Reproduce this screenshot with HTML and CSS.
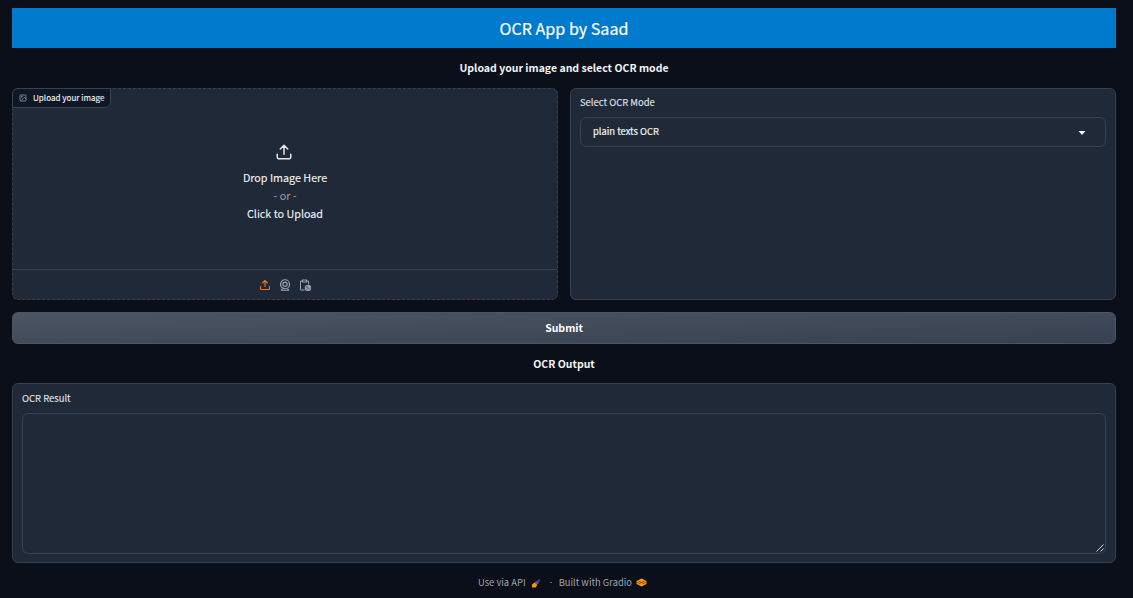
FILE: index.html
```html
<!DOCTYPE html>
<html lang="en">
<head>
<meta charset="utf-8">
<title>OCR App by Saad</title>
<link rel="stylesheet" href="styles.css">
</head>
<body>
<main class="app">
  <h1 class="banner">OCR App by Saad</h1>
  <h2 class="heading">Upload your image and select OCR mode</h2>
  <div class="row">
    <section class="panel upload">
      <div class="tag">
        <svg class="tag-icon" viewBox="0 0 24 24" fill="none" stroke="currentColor" stroke-width="2.2"><rect x="3" y="3" width="18" height="18" rx="2"/><circle cx="8.5" cy="8.5" r="1.5"/><path d="M21 15l-5-5L5 21"/></svg>
        <span>Upload your image</span>
      </div>
      <div class="drop">
        <svg class="drop-icon" viewBox="0 0 24 24" fill="none" stroke="currentColor" stroke-width="2" stroke-linecap="round" stroke-linejoin="round"><path d="M21 15v4a2 2 0 0 1-2 2H5a2 2 0 0 1-2-2v-4M17 8l-5-5-5 5M12 3v12"/></svg>
        <span>Drop Image Here</span>
        <span class="or">- or -</span>
        <span>Click to Upload</span>
      </div>
      <div class="sources">
        <svg class="source active" viewBox="0 0 24 24" fill="none" stroke="currentColor" stroke-width="2.2" stroke-linecap="round" stroke-linejoin="round"><path d="M21 15v4a2 2 0 0 1-2 2H5a2 2 0 0 1-2-2v-4M17 8l-5-5-5 5M12 3v12"/></svg>
        <svg class="source" viewBox="0 0 24 24" fill="none" stroke="currentColor" stroke-width="2.4"><circle cx="12" cy="10.5" r="9"/><circle cx="12" cy="10.5" r="4.2"/><path d="M7 19l-2 3.500h14l-2-3.500"/></svg>
        <svg class="source" viewBox="0 0 24 24" fill="none" stroke="currentColor" stroke-width="2"><path d="M11 22H3V4h4M15 4h4v7"/><rect x="7" y="2" width="8" height="4"/><rect x="12.500" y="13" width="11" height="10" rx="3" fill="currentColor"/><circle cx="16" cy="16" r=".6" class="cut"/><path d="M14 22l5-4 4 4" class="cut" stroke-width="1"/></svg>
      </div>
    </section>
    <section class="panel mode">
      <div class="label">Select OCR Mode</div>
      <div class="select"><span>plain texts OCR</span><svg class="caret" viewBox="0 0 8 4"><path d="M.5 0h7L4 4z" fill="currentColor"/></svg></div>
    </section>
  </div>
  <button class="submit">Submit</button>
  <h2 class="heading output">OCR Output</h2>
  <section class="panel result">
    <div class="label">OCR Result</div>
    <div class="textarea"><svg class="grip" viewBox="0 0 8 8" stroke="currentColor" fill="none"><path d="M0.5 7.5l7-7M4.5 7.5l3-3"/></svg></div>
  </section>
  <footer class="footer">
    <span class="api">Use via API</span>
    <svg class="rocket" viewBox="0 0 10 10"><path d="M5 3.500L7.500 1.500 9.500 1 8.500 4 7 6z" fill="#41426b"/><path d="M5 3l2.500 2.500-2 1-2-2z" fill="#5a5a80"/><path d="M1 6.500L3.500 4.500l2.800 2.500L4.500 9.500l-3.500 0z" fill="#ff9800"/></svg>
    <span class="dot">·</span>
    <span class="built">Built with Gradio</span>
    <svg class="gradio" viewBox="0 0 11 9"><path d="M.5 3L5.500.5l5 2.500v3l-5 2.500-5-2.500z" fill="#ff9800"/><path d="M0 4.500l2.500 0M8.500 4.500H11M2.500 3l3 1.500L8.500 3M2.500 5.800l3-1.300 3 1.300" fill="none" stroke="#6b430a" stroke-width=".8"/></svg>
  </footer>
</main>
</body>
</html>
```
FILE: styles.css
```css
* { box-sizing: border-box; }
body {
  margin: 0;
  background: #0b0f19;
  color: #f3f4f6;
  font-family: "Noto Sans CJK SC", "Noto Sans", sans-serif;
  font-size: 11px;
}
.app {
  width: 1128px;
  height: 598px;
  padding: 8px 12px 0;
  display: flex;
  flex-direction: column;
  overflow: hidden;
}
.app > * { flex-shrink: 0; }
.app span, .label { white-space: nowrap; }
.banner {
  margin: 0;
  height: 40px;
  line-height: 41px;
  background: #007acc;
  color: #fff;
  text-align: center;
  font-size: 16.100px;
  font-weight: 400;
  -webkit-text-stroke: 0.2px;
}
.heading {
  margin: 0;
  height: 40px;
  line-height: 39px;
  text-align: center;
  font-size: 10.500px;
  font-weight: 700;
}
.output { height: 39px; }
.row { display: grid; grid-template-columns: 1fr 1fr; gap: 12px; height: 212px; }
.panel { border: 1px solid #374151; border-radius: 6px; background: #1f2937; }
.upload { position: relative; display: flex; flex-direction: column; border-style: dashed; }
.tag {
  position: absolute;
  top: -1px;
  left: -1px;
  height: 20px;
  width: 99px;
  padding: 0 0 1px 6px;
  display: flex;
  align-items: center;
  gap: 6px;
  border: 1px solid #374151;
  border-radius: 6px 0 6px 0;
  background: #0f1725;
  font-size: 8.100px;
  -webkit-text-stroke: 0.1px;
}
.tag-icon { width: 8px; height: 8px; color: #9ca3af; }
.drop {
  flex: 1;
  padding-top: 54px;
  display: flex;
  flex-direction: column;
  align-items: center;
  font-size: 10.750px;
  line-height: 18px;
  -webkit-text-stroke: 0.1px;
}
.drop-icon { width: 20px; height: 18px; margin: 0 2px 8px 0; color: #e5e7eb; }
.or { color: #9ca3af; -webkit-text-stroke: 0; }
.sources {
  height: 30px;
  border-top: 1px solid #374151;
  display: flex;
  justify-content: center;
  align-items: center;
  gap: 8px;
  color: #9ca3af;
}
.source { width: 12px; height: 12px; }
.active { color: #f97316; }
.cut { stroke: #1f2937; }
.mode { padding: 5px 9px; }
.label {
  height: 18px;
  line-height: 17px;
  font-size: 9.450px;
  color: #e5e7eb;
  -webkit-text-stroke: 0.1px;
}
.select {
  margin-top: 5px;
  height: 30px;
  padding: 0 19px 2px 12px;
  display: flex;
  align-items: center;
  justify-content: space-between;
  border: 1px solid #374151;
  border-radius: 6px;
  font-size: 9.400px;
  -webkit-text-stroke: 0.2px;
}
.caret { width: 8px; height: 4px; margin-top: 4px; }
.submit {
  margin: 12px 0 0;
  padding: 0;
  height: 32px;
  border: 1px solid #4b5563;
  border-radius: 6px;
  background: linear-gradient(to bottom right, #4b5563, #374151);
  color: #fff;
  font: 700 10.500px/30px "Noto Sans CJK SC", "Noto Sans", sans-serif;
}
.result { height: 180px; padding: 6px 9px; }
.textarea {
  margin-top: 5px;
  height: 141px;
  padding: 0 1px 1px 0;
  border: 1px solid #374151;
  border-radius: 6px;
  display: flex;
  align-items: flex-end;
  justify-content: flex-end;
}
.grip { width: 8px; height: 8px; color: #d1d5db; }
.footer {
  height: 38px;
  padding-right: 3px;
  display: flex;
  align-items: center;
  justify-content: center;
  color: #9ca3af;
  font-size: 9.400px;
}
.rocket { width: 10px; height: 10px; margin: 1px 0 0 5px; }
.dot { width: 3px; margin: 0 6px 0 9px; font-family: "Noto Sans", sans-serif; }
.gradio { width: 11px; height: 9px; margin-left: 4px; }
```
